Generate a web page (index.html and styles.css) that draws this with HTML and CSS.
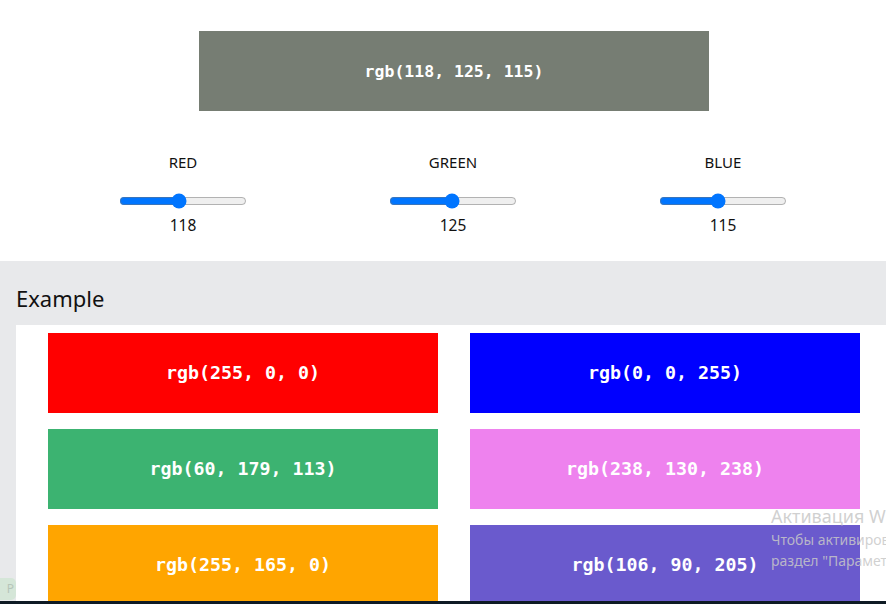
FILE: index.html
```html
<!DOCTYPE html>
<html lang="en">
<head>
<meta charset="utf-8">
<title>RGB</title>
<link rel="stylesheet" href="styles.css">
</head>
<body>
<section class="picker">
  <div class="preview" style="background: rgb(118, 125, 115)">rgb(118, 125, 115)</div>
  <div class="sliders">
    <div class="channel">
      <label class="ch-label" for="r">RED</label>
      <input id="r" class="range" type="range" min="0" max="255" value="118">
      <span class="ch-value">118</span>
    </div>
    <div class="channel">
      <label class="ch-label" for="g">GREEN</label>
      <input id="g" class="range" type="range" min="0" max="255" value="125">
      <span class="ch-value">125</span>
    </div>
    <div class="channel">
      <label class="ch-label" for="b">BLUE</label>
      <input id="b" class="range" type="range" min="0" max="255" value="115">
      <span class="ch-value">115</span>
    </div>
  </div>
</section>
<section class="example">
  <h2 class="example-title">Example</h2>
  <div class="panel">
    <div class="grid">
      <div class="swatch" style="background: rgb(255, 0, 0)">rgb(255, 0, 0)</div>
      <div class="swatch" style="background: rgb(0, 0, 255)">rgb(0, 0, 255)</div>
      <div class="swatch" style="background: rgb(60, 179, 113)">rgb(60, 179, 113)</div>
      <div class="swatch" style="background: rgb(238, 130, 238)">rgb(238, 130, 238)</div>
      <div class="swatch" style="background: rgb(255, 165, 0)">rgb(255, 165, 0)</div>
      <div class="swatch" style="background: rgb(106, 90, 205)">rgb(106, 90, 205)</div>
    </div>
  </div>
</section>
<div class="watermark">
  <div class="wm-title">Активация Windows</div>
  <div class="wm-text">Чтобы активировать Windows, перейдите в</div>
  <div class="wm-text">раздел "Параметры".</div>
</div>
<div class="side-widget">P</div>
<div class="taskbar"></div>
</body>
</html>
```
FILE: styles.css
```css
html, body {
  margin: 0;
  padding: 0;
  overflow: hidden;
  height: 604px;
}
body {
  font-family: "Segoe UI", "Noto Sans", "Open Sans", sans-serif;
  color: #212529;
  background: #fff;
}
.picker {
  height: 261px;
  padding-top: 31px;
  box-sizing: border-box;
}
.preview {
  width: 510px;
  height: 80px;
  margin-left: 199px;
  display: flex;
  align-items: center;
  justify-content: center;
  color: #fff;
  font-family: "DejaVu Sans Mono", "Liberation Mono", monospace;
  font-weight: bold;
  font-size: 16.5px;
}
.sliders {
  display: grid;
  grid-template-columns: repeat(3, 270px);
  margin-left: 48px;
  margin-top: 41px;
}
.channel {
  display: flex;
  flex-direction: column;
  align-items: center;
}
.ch-label {
  font-size: 15px;
  line-height: 20px;
  color: #111;
}
.range {
  width: 128px;
  margin: 21px 0 0;
  height: 16px;
}
.ch-value {
  font-size: 15.5px;
  line-height: 20px;
  margin-top: 6px;
  color: #111;
}
.example {
  background: #e8e9eb;
  padding-top: 23px;
  height: 343px;
  box-sizing: border-box;
}
.example-title {
  margin: 0 0 12px 16px;
  font-weight: normal;
  font-size: 22px;
  line-height: 29px;
  color: #111;
}
.panel {
  background: #fff;
  margin-left: 16px;
  padding: 8px 0 0 32px;
  height: 300px;
}
.grid {
  display: grid;
  grid-template-columns: 390px 390px;
  column-gap: 32px;
  row-gap: 16px;
}
.swatch {
  height: 80px;
  padding-bottom: 2px;
  box-sizing: border-box;
  display: flex;
  align-items: center;
  justify-content: center;
  color: #fff;
  font-family: "DejaVu Sans Mono", "Liberation Mono", monospace;
  font-weight: bold;
  font-size: 18.3px;
}
.watermark {
  position: absolute;
  left: 771px;
  top: 504px;
  white-space: nowrap;
  color: rgba(200, 200, 200, 0.85);
  font-family: "Segoe UI", "Noto Sans", sans-serif;
}
.wm-title {
  font-size: 18px;
  line-height: 25px;
}
.wm-text {
  font-size: 14px;
  line-height: 21px;
}
.side-widget {
  position: absolute;
  left: -6px;
  top: 578px;
  width: 20px;
  height: 22px;
  border-radius: 5px;
  background: #d5e6d8;
  color: #b5c5b8;
  font-size: 12px;
  line-height: 22px;
  text-align: right;
  padding-right: 2px;
}
.taskbar {
  position: absolute;
  left: 0;
  right: 0;
  top: 601px;
  height: 3px;
  background: #0e1a24;
}
```
